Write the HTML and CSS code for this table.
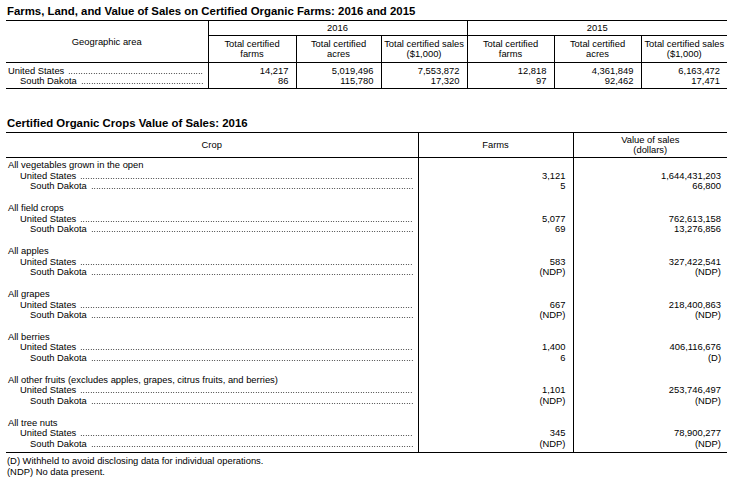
FILE: index.html
```html
<!DOCTYPE html>
<html>
<head>
<meta charset="utf-8">
<link rel="stylesheet" href="styles.css">
</head>
<body>
<div class="title">Farms, Land, and Value of Sales on Certified Organic Farms: 2016 and 2015</div>
<table class="t1">
  <colgroup>
    <col class="w-area"><col class="w-88"><col class="w-85"><col class="w-86"><col class="w-87"><col class="w-87"><col class="w-86">
  </colgroup>
  <thead>
    <tr class="hr1">
      <th class="area" rowspan="2">Geographic area</th>
      <th class="yr" colspan="3">2016</th>
      <th class="yr" colspan="3">2015</th>
    </tr>
    <tr class="hr2">
      <th>Total certified<br>farms</th>
      <th>Total certified<br>acres</th>
      <th>Total certified sales<br>($1,000)</th>
      <th>Total certified<br>farms</th>
      <th>Total certified<br>acres</th>
      <th>Total certified sales<br>($1,000)</th>
    </tr>
  </thead>
  <tbody>
    <tr class="r-first">
      <td class="lab"><div class="ld">United States</div></td>
      <td class="num">14,217</td><td class="num">5,019,496</td><td class="num">7,553,872</td>
      <td class="num">12,818</td><td class="num">4,361,849</td><td class="num">6,163,472</td>
    </tr>
    <tr class="r-last">
      <td class="lab"><div class="ld in1">South Dakota</div></td>
      <td class="num">86</td><td class="num">115,780</td><td class="num">17,320</td>
      <td class="num">97</td><td class="num">92,462</td><td class="num">17,471</td>
    </tr>
  </tbody>
</table>

<div class="title title2">Certified Organic Crops Value of Sales: 2016</div>
<table class="t2">
  <colgroup><col class="w-crop"><col class="w-farms"><col class="w-val"></colgroup>
  <thead>
    <tr>
      <th>Crop</th>
      <th>Farms</th>
      <th>Value of sales<br>(dollars)</th>
    </tr>
  </thead>
  <tbody>
    <tr class="grp first">
      <td class="lab"><div>All vegetables grown in the open</div><div class="ld us">United States</div><div class="ld sd">South Dakota</div></td>
      <td class="num f"><div>&nbsp;</div><div>3,121</div><div>5</div></td>
      <td class="num v"><div>&nbsp;</div><div>1,644,431,203</div><div>66,800</div></td>
    </tr>
    <tr class="grp">
      <td class="lab"><div>All field crops</div><div class="ld us">United States</div><div class="ld sd">South Dakota</div></td>
      <td class="num f"><div>&nbsp;</div><div>5,077</div><div>69</div></td>
      <td class="num v"><div>&nbsp;</div><div>762,613,158</div><div>13,276,856</div></td>
    </tr>
    <tr class="grp">
      <td class="lab"><div>All apples</div><div class="ld us">United States</div><div class="ld sd">South Dakota</div></td>
      <td class="num f"><div>&nbsp;</div><div>583</div><div>(NDP)</div></td>
      <td class="num v"><div>&nbsp;</div><div>327,422,541</div><div>(NDP)</div></td>
    </tr>
    <tr class="grp">
      <td class="lab"><div>All grapes</div><div class="ld us">United States</div><div class="ld sd">South Dakota</div></td>
      <td class="num f"><div>&nbsp;</div><div>667</div><div>(NDP)</div></td>
      <td class="num v"><div>&nbsp;</div><div>218,400,863</div><div>(NDP)</div></td>
    </tr>
    <tr class="grp">
      <td class="lab"><div>All berries</div><div class="ld us">United States</div><div class="ld sd">South Dakota</div></td>
      <td class="num f"><div>&nbsp;</div><div>1,400</div><div>6</div></td>
      <td class="num v"><div>&nbsp;</div><div>406,116,676</div><div>(D)</div></td>
    </tr>
    <tr class="grp">
      <td class="lab"><div>All other fruits (excludes apples, grapes, citrus fruits, and berries)</div><div class="ld us">United States</div><div class="ld sd">South Dakota</div></td>
      <td class="num f"><div>&nbsp;</div><div>1,101</div><div>(NDP)</div></td>
      <td class="num v"><div>&nbsp;</div><div>253,746,497</div><div>(NDP)</div></td>
    </tr>
    <tr class="grp last">
      <td class="lab"><div>All tree nuts</div><div class="ld us">United States</div><div class="ld sd">South Dakota</div></td>
      <td class="num f"><div>&nbsp;</div><div>345</div><div>(NDP)</div></td>
      <td class="num v"><div>&nbsp;</div><div>78,900,277</div><div>(NDP)</div></td>
    </tr>
  </tbody>
</table>
<div class="notes">
  <div>(D) Withheld to avoid disclosing data for individual operations.</div>
  <div>(NDP) No data present.</div>
</div>
</body>
</html>
```

FILE: styles.css
```css
html, body {
  margin: 0;
  padding: 0;
  background: #fff;
}
body {
  padding-left: 6px;
  font-family: "Liberation Sans", Arial, sans-serif;
  font-size: 9.4px;
  color: #000;
}
.title {
  font-weight: bold;
  font-size: 11.4px;
  line-height: 14px;
  margin: 4px 0 2px 1px;
}
.title2 {
  margin-top: 27px;
}
table {
  border-collapse: collapse;
  table-layout: fixed;
  width: 721px;
  border-top: 1px solid #000;
  border-bottom: 1px solid #000;
}
th, td {
  padding: 0;
  font-weight: normal;
  line-height: 10px;
}
th {
  text-align: center;
  vertical-align: middle;
}
th + th, td + td {
  border-left: 1px solid #000;
}

/* table 1 */
.w-area { width: 202px; }
.w-88 { width: 88px; }
.w-85 { width: 85px; }
.w-86 { width: 86px; }
.w-87 { width: 87px; }
.t1 .hr1 th { height: 14px; }
.t1 .yr { border-left: 1px solid #000; border-bottom: 1px solid #000; }
.t1 .area { border-bottom: 1px solid #000; }
.t1 .hr2 th { height: 26px; border-bottom: 1px solid #000; border-left: 1px solid #000; }
.t1 .r-first td { padding-top: 3px; }
.t1 .r-last td { padding-bottom: 2px; }
.num {
  text-align: right;
  padding-right: 7px;
}
.t1 .lab {
  padding-left: 2px;
  padding-right: 5px;
}
.ld {
  display: flex;
  align-items: baseline;
  white-space: nowrap;
}
.ld::after {
  content: "";
  flex: 1;
  height: 1px;
  background-image: radial-gradient(circle, #222 0.6px, transparent 0.7px);
  background-size: 2.5px 1px;
  margin-left: 4px;
}
.in1 { padding-left: 12px; }

/* table 2 */
.w-crop { width: 412px; }
.w-farms { width: 155px; }
.w-val { width: 154px; }
.t2 thead th {
  height: 24px;
  border-bottom: 1px solid #000;
}
.t2 td {
  line-height: 10.6px;
  vertical-align: top;
  padding-bottom: 11.2px;
}
.t2 .grp.first td { padding-top: 2px; }
.t2 .grp.last td { padding-bottom: 2px; }
.t2 .lab {
  padding-left: 2px;
  padding-right: 5px;
}
.t2 .us { padding-left: 12px; }
.t2 .sd { padding-left: 22px; }
.t2 .v { padding-right: 6px; }

.notes {
  padding: 2px 0 0 1px;
  line-height: 11px;
}
```
